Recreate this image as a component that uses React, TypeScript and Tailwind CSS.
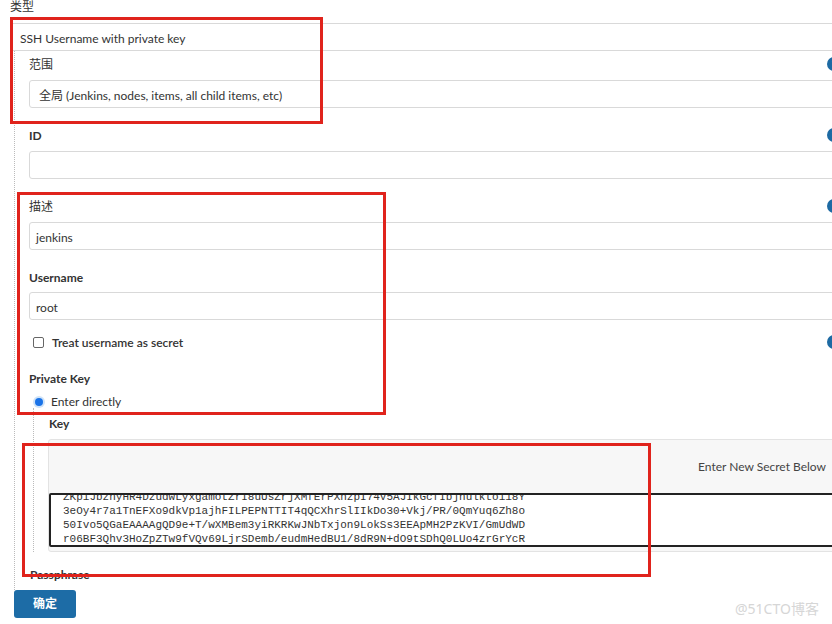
import React from "react";

const sans = { fontFamily: "Lato, 'Noto Sans CJK SC', sans-serif" };

function Help() {
  return (
    <span className="w-[14px] h-[14px] rounded-full bg-[#1d6aa3] text-white text-[10px] font-bold flex items-center justify-center shrink-0">
      ?
    </span>
  );
}

function LabelRow({ label, bold, help, className }: { label: string; bold?: boolean; help?: boolean; className?: string }) {
  return (
    <div className={"flex items-center justify-between h-[14px] " + (className ?? "")}>
      <span className={"mt-[2px] text-[12px] leading-[14px] text-[#333] " + (bold ? "font-bold" : "")}>{label}</span>
      {help ? <Help /> : null}
    </div>
  );
}

function Input({ value, className }: { value?: string; className?: string }) {
  return (
    <div className={"h-[28px] border border-[#d9d9d9] rounded-[3px] bg-white flex items-center pt-[3px] pl-[6px] text-[12px] text-[#333] " + (className ?? "")}>
      {value}
    </div>
  );
}

const keyLines = [
  "ZKpiJbznyHR4DzudwLyxgamotZrI8uUsZrjXMfErPXhzpI74V5AJIkGcfIbjnulktoi18Y",
  "3eOy4r7a1TnEFXo9dkVp1ajhFILPEPNTTIT4qQCXhrSlIIkDo30+Vkj/PR/0QmYuq6Zh8o",
  "50Ivo5QGaEAAAAgQD9e+T/wXMBem3yiRKRKwJNbTxjon9LokSs3EEApMH2PzKVI/GmUdWD",
  "r06BF3Qhv3HoZpZTw9fVQv69LjrSDemb/eudmHedBU1/8dR9N+dO9tSDhQ0LUo4zrGrYcR",
];

export default function App() {
  return (
    <div className="w-[832px] h-[624px] overflow-hidden bg-white relative" style={sans}>
      <div className="w-[831px] ml-[10px]">
        <div className="h-[13px] flex items-center">
          <span className="text-[12px] leading-[14px] text-[#333]">类型</span>
        </div>
        <div className="mt-[10px] h-[28px] border border-[#d9d9d9] rounded-[2px] flex items-center pt-[4px] pl-[9px] text-[12px] text-[#333]">
          SSH Username with private key
        </div>
        <div className="ml-[4px] border-l border-dotted border-[#bbb] pl-[14px] pt-[6px] pb-[9px]">
          <LabelRow label="范围" help />
          <Input className="mt-[9px] pl-[9px]" value="全局 (Jenkins, nodes, items, all child items, etc)" />
          <LabelRow label="ID" bold help className="mt-[20px]" />
          <Input className="mt-[9px]" />
          <LabelRow label="描述" help className="mt-[20px]" />
          <Input className="mt-[9px]" value="jenkins" />
          <LabelRow label="Username" bold className="mt-[20px]" />
          <Input className="mt-[8px]" value="root" />
          <div className="mt-[15px] flex items-center justify-between h-[14px]">
            <div className="flex items-center mt-[1px]">
              <span className="ml-[4px] w-[11px] h-[11px] border border-[#666] rounded-[2px] bg-white" />
              <span className="ml-[8px] text-[12px] font-semibold text-[#333]">Treat username as secret</span>
            </div>
            <Help />
          </div>
          <LabelRow label="Private Key" bold className="mt-[22px]" />
          <div className="mt-[9px] flex items-center h-[14px]">
            <span className="mt-[1px] ml-[4px] w-[12px] h-[12px] rounded-full bg-[#cfe3f8] flex items-center justify-center">
              <span className="w-[8px] h-[8px] rounded-full bg-[#1a73e8]" />
            </span>
            <span className="mt-[2px] ml-[6px] text-[12px] text-[#333]">Enter directly</span>
          </div>
          <div className="ml-[4px] border-l border-dotted border-[#bbb] pl-[14px] pt-[8px]">
            <LabelRow label="Key" bold className="pl-[1px]" />
            <div className="mt-[9px] h-[113px] border border-[#e3e3e3] rounded-[3px] bg-[#f7f7f7] flex flex-col">
              <div className="h-[53px] flex items-center justify-end pr-[14px] pt-[1px] text-[12px] text-[#444]">
                Enter New Secret Below
              </div>
              <div className="h-[54px] border-2 border-[#222] rounded-[2px] bg-white overflow-hidden pl-[12px]">
                <div className="-mt-[5px] text-[11px] leading-[14px] text-[#333] whitespace-pre" style={{ fontFamily: "'Liberation Mono', monospace" }}>
                  {keyLines.map((l) => (
                    <div key={l}>{l}</div>
                  ))}
                </div>
              </div>
            </div>
          </div>
          <LabelRow label="Passphrase" bold className="mt-[15px] pl-[1px]" />
        </div>
        <button className="ml-[4px] h-[28px] w-[62px] rounded-[3px] bg-[#1d6ca6] text-white text-[12px] font-bold">
          确定
        </button>
      </div>

      <div className="absolute left-[10px] top-[17px] w-[313px] h-[107px] border-[3px] border-[#e0231c]" />
      <div className="absolute left-[17px] top-[192px] w-[369px] h-[223px] border-[3px] border-[#e0231c]" />
      <div className="absolute left-[22px] top-[443px] w-[629px] h-[134px] border-[3px] border-[#e0231c]" />

      <div className="absolute left-[735px] top-[598px] text-[14px] text-[#d6d6d6]" style={{ fontFamily: "'Noto Sans', 'Noto Sans CJK SC', sans-serif" }}>
        @51CTO博客
      </div>
    </div>
  );
}
